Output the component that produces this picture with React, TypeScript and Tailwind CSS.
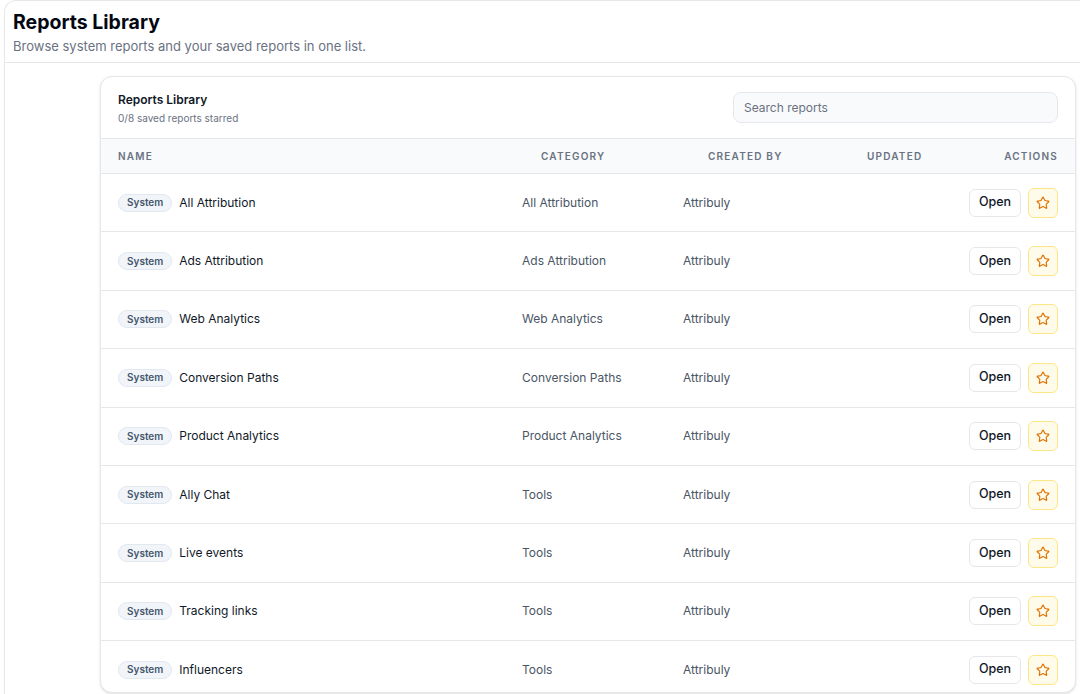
import React from "react";
import { Star } from "lucide-react";

const rows = [
  ["All Attribution", "All Attribution"],
  ["Ads Attribution", "Ads Attribution"],
  ["Web Analytics", "Web Analytics"],
  ["Conversion Paths", "Conversion Paths"],
  ["Product Analytics", "Product Analytics"],
  ["Ally Chat", "Tools"],
  ["Live events", "Tools"],
  ["Tracking links", "Tools"],
  ["Influencers", "Tools"],
];

export default function App() {
  return (
    <div className="h-[694px] overflow-hidden bg-white pl-1 font-['Inter',sans-serif]">
      <div className="h-full rounded-tl-xl border-l border-t border-gray-200">
        <div className="h-[62px] border-b border-gray-200 px-2 pt-[7px]">
          <h1 className="text-[19.5px] font-bold leading-[28px] text-gray-950">Reports Library</h1>
          <p className="text-[13px] leading-[20px] text-gray-500">
            Browse system reports and your saved reports in one list.
          </p>
        </div>
        <div className="pl-[95px] pr-[4px] pt-[13px]">
          <div className="overflow-hidden rounded-xl border border-gray-200 bg-white shadow-sm">
            <div className="flex h-[62px] items-start justify-between border-b border-gray-200 px-[17px] pt-[15px]">
              <div>
                <div className="text-[12px] font-semibold leading-[16px] text-gray-900">Reports Library</div>
                <div className="mt-[3px] text-[10px] leading-[14px] text-gray-500">0/8 saved reports starred</div>
              </div>
              <input
                placeholder="Search reports"
                className="-mt-[0px] h-[31px] w-[325px] rounded-lg border border-gray-200 bg-gray-50 px-[10px] text-[12px] text-gray-700 placeholder:text-gray-500"
              />
            </div>
            <div className="grid h-[35px] grid-cols-[423px_167px_159px_1fr_auto] items-center border-b border-gray-200 bg-slate-50 px-[17px] text-[10px] font-semibold uppercase tracking-[0.12em] text-gray-500">
              <div>Name</div>
              <div>Category</div>
              <div>Created by</div>
              <div>Updated</div>
              <div className="text-right">Actions</div>
            </div>
            {rows.map(([name, cat], i) => (
              <div
                key={name}
                className={`grid grid-cols-[404px_161px_1fr_auto] items-center px-[17px] ${
                  i < rows.length - 1 ? "h-[58.4px] border-b border-gray-200" : "h-[51px] pt-[6px]"
                }`}
              >
                <div className="flex items-center gap-[7px]">
                  <span className="inline-flex h-[18px] items-center rounded-full border border-slate-200 bg-slate-100 px-[8px] text-[10px] font-semibold text-slate-600">
                    System
                  </span>
                  <span className="text-[12px] text-gray-900">{name}</span>
                </div>
                <div className="text-[12px] text-gray-600">{cat}</div>
                <div className="text-[12px] text-gray-600">Attribuly</div>
                <div className="flex items-center gap-[7px]">
                  <button className="flex h-[28px] w-[52px] items-center justify-center rounded-md border border-gray-200 bg-white text-[12.5px] font-medium text-gray-900">
                    Open
                  </button>
                  <button className="flex h-[30px] w-[30px] items-center justify-center rounded-md border border-amber-200 bg-amber-50">
                    <Star size={14} strokeWidth={2} className="text-amber-600" />
                  </button>
                </div>
              </div>
            ))}
          </div>
        </div>
      </div>
    </div>
  );
}
